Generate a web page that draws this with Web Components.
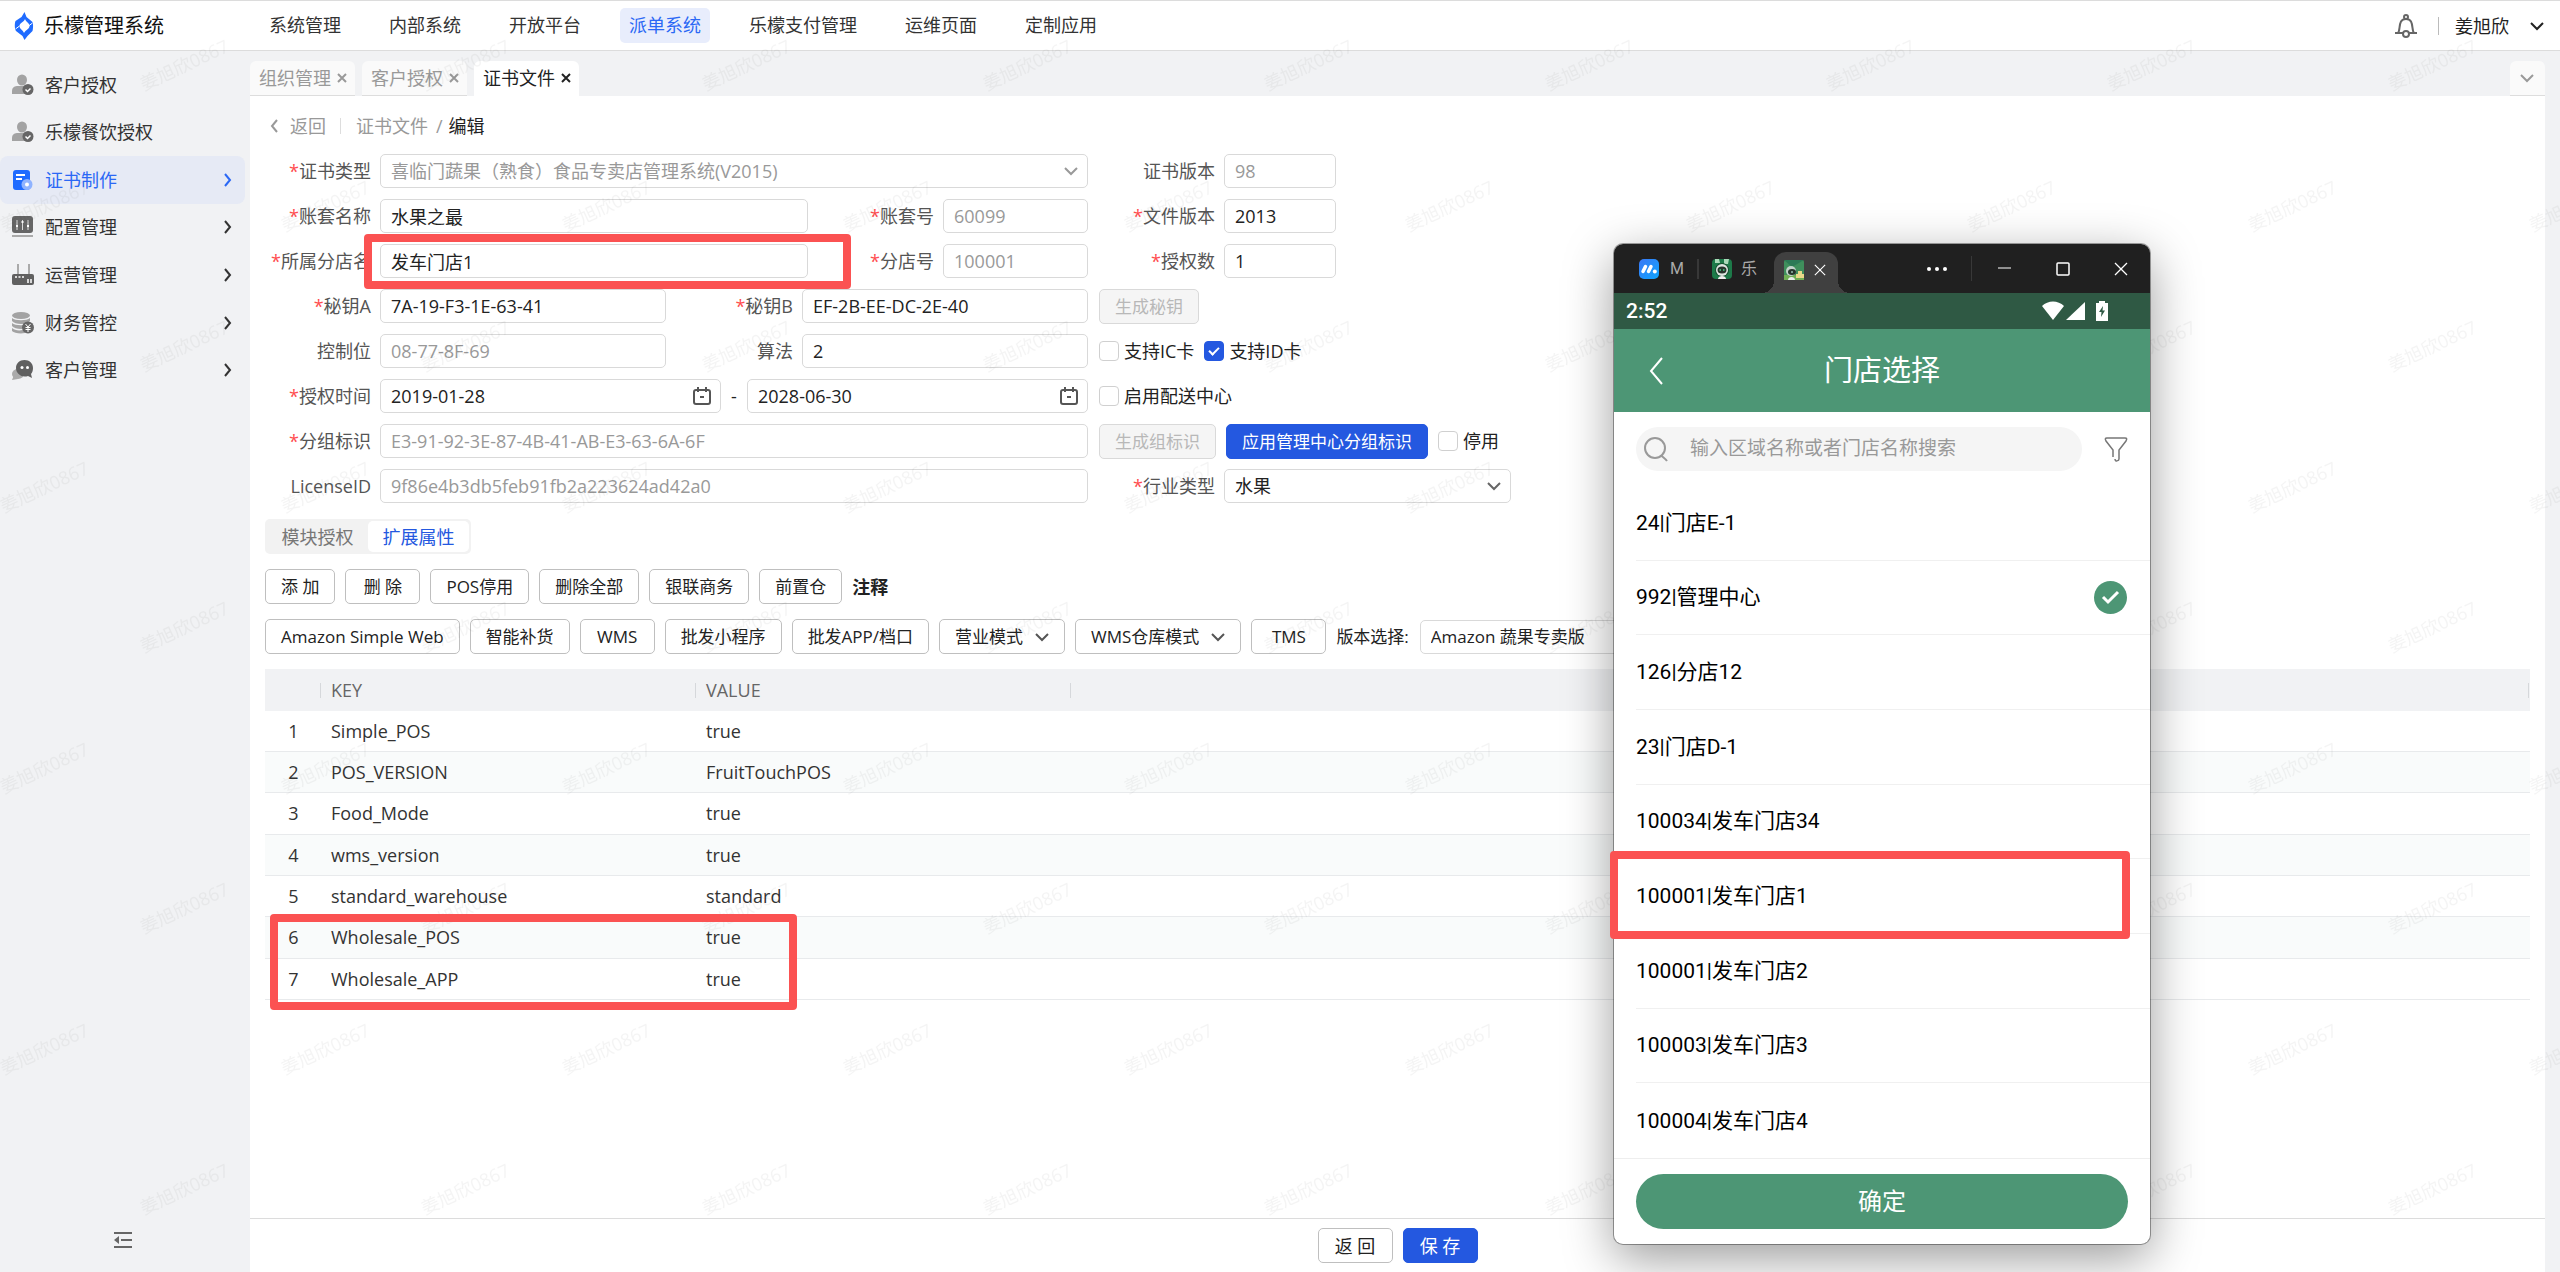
<!DOCTYPE html>
<html lang="zh-CN">
<head>
<meta charset="utf-8">
<title>乐檬管理系统</title>
<style>
  html, body { margin: 0; }
  body {
    position: relative;
    overflow-x: hidden;
    font-family: "Open Sans", "Noto Sans CJK SC", sans-serif;
    font-size: 18px;
    line-height: 24px;
    color: #222;
    background: #f1f2f4;
  }
</style>
</head>
<body>

<app-shell>
  <top-bar slot="top"></top-bar>
  <side-bar slot="side"></side-bar>
  <tab-strip slot="tabs"></tab-strip>
  <crumb-bar></crumb-bar>
  <license-form></license-form>
  <seg-switch></seg-switch>
  <tool-row>
    <ui-button>添 加</ui-button>
    <ui-button wide>删 除</ui-button>
    <ui-button>POS停用</ui-button>
    <ui-button>删除全部</ui-button>
    <ui-button>银联商务</ui-button>
    <ui-button>前置仓</ui-button>
    <b>注释</b>
  </tool-row>
  <tool-row>
    <ui-button>Amazon Simple Web</ui-button>
    <ui-button>智能补货</ui-button>
    <ui-button wide>WMS</ui-button>
    <ui-button>批发小程序</ui-button>
    <ui-button>批发APP/档口</ui-button>
    <ui-button menu>营业模式</ui-button>
    <ui-button menu>WMS仓库模式</ui-button>
    <ui-button wide>TMS</ui-button>
    <form-field class="version" label="版本选择:" type="select" value="Amazon 蔬果专卖版"></form-field>
  </tool-row>
  <data-grid></data-grid>
  <page-actions slot="foot"></page-actions>
</app-shell>
<water-mark></water-mark>
<phone-window></phone-window>

<script>
(function (customElements) {

  const ICONS = {
    logo: '<svg width="20" height="28" viewBox="0 0 20 28"><path fill="#1f6bff" d="M10.500 0l2 5 6 5c1 2 .5 8 0 9l-5 5-3 4-2-4-6.500-5C.5 17 .5 11 1.500 9l6-4z"/><path fill="#fff" d="M11 7c1 3 4.500 4 4.500 7s-4 4-5.500 7c-1-3-4.500-4-4.500-7S10 10 11 7z"/><path d="M14.500 14l4-3M5.500 14l-4 3" stroke="#fff" stroke-width="1"/></svg>',
    down: '<svg width="14" height="10" viewBox="0 0 14 10"><path d="M1 2l6 6 6-6" fill="none" stroke="currentColor" stroke-width="2"/></svg>',
    right: '<svg width="10" height="16" viewBox="0 0 10 16"><path d="M2 2l5 6-5 6" fill="none" stroke="currentColor" stroke-width="2"/></svg>',
    left: '<svg width="10" height="14" viewBox="0 0 10 14"><path d="M8 1L3 7l5 6" fill="none" stroke="currentColor" stroke-width="2"/></svg>',
    close: '<svg width="12" height="12" viewBox="0 0 12 12"><path d="M2 2l8 8M10 2l-8 8" fill="none" stroke="currentColor" stroke-width="2"/></svg>',
    bell: '<svg width="24" height="24" viewBox="0 0 24 24"><g fill="none" stroke="#666" stroke-width="2"><path d="M1 19h22M4 19c2-2 1-8 3-11.500C9 4 15 4 17 7.500c2 3.500 1 9.500 3 11.500"/><circle cx="12" cy="20" r="3" fill="#fff"/><circle cx="12" cy="3" r="2"/></g></svg>',
    person: '<svg width="22" height="22" viewBox="0 0 22 22"><ellipse cx="10" cy="6" rx="5" ry="5.500" fill="#a3a3a3"/><path fill="#a3a3a3" d="M0 20v-3c0-4 3-5 6-5h8c2 0 3 1 3 2v6z"/><circle cx="16" cy="15.500" r="5.500" fill="#666"/><path d="M13.500 15.500l2 2 3-3" fill="none" stroke="#fff" stroke-width="1.500"/></svg>',
    cert: '<svg width="22" height="22" viewBox="0 0 22 22"><rect x="1" y="1" width="17" height="20" rx="3" fill="#1f6bff"/><path d="M4 6h9M4 10h6" stroke="#fff" stroke-width="2"/><circle cx="15" cy="15.500" r="5.500" fill="#8fb3ff"/><circle cx="15" cy="15.500" r="2" fill="#fff"/></svg>',
    config: '<svg width="22" height="22" viewBox="0 0 22 22"><rect x="0" y="0" width="21" height="17" rx="3" fill="#666"/><rect x="0" y="19" width="21" height="2" fill="#aaa"/><path d="M5 4v10M10.500 4v10M16 4v10" stroke="#ddd" stroke-width="1"/><path d="M4 10h2M9.500 6h2M15 10h2" stroke="#fff" stroke-width="2"/></svg>',
    router: '<svg width="23" height="22" viewBox="0 0 23 22"><path d="M6 0v11M17 0v11" stroke="#aaa" stroke-width="2"/><rect x="0" y="10" width="22" height="11" rx="2" fill="#606060"/><path d="M3 13h2M6.500 13h2M10 13h2M16 15v4M19 15v4" stroke="#fff" stroke-width="1.500"/></svg>',
    money: '<svg width="22" height="22" viewBox="0 0 22 22"><g fill="#a3a3a3"><ellipse cx="9" cy="3.500" rx="9" ry="3.500"/><path d="M0 6c3 3 15 3 18 0v3c-3 4-15 4-18 0zM0 11c3 3 15 3 18 0v3c-3 4-15 4-18 0zM0 16c3 3 10 3 13 1v4c-5 1-11 0-13-2z"/></g><circle cx="16" cy="15.500" r="6" fill="#666"/><path d="M13.500 12l2.500 3 2.500-3M16 15v5M13.500 15.500h5M13.500 17.500h5" fill="none" stroke="#fff"/></svg>',
    chat: '<svg width="22" height="22" viewBox="0 0 22 22"><ellipse cx="6" cy="15" rx="6" ry="5" fill="#aaa"/><path d="M0 21l2-5 4 4z" fill="#aaa"/><path d="M12.500 1c5 0 8.500 3.500 8.500 8 0 3-1 5-2 6l1 4-4-2c-6 2-12-2-12-8 0-4.500 3.500-8 8.500-8z" fill="#606060"/><circle cx="10" cy="8.500" r="1.500" fill="#fff"/><circle cx="15.500" cy="8.500" r="1.500" fill="#fff"/></svg>',
    fold: '<svg width="18" height="16" viewBox="0 0 18 16"><path d="M0 1h18M7 8h11M0 15h18" stroke="#666" stroke-width="2"/><path d="M0 8l5-4v8z" fill="#666"/></svg>',
    calendar: '<svg width="18" height="18" viewBox="0 0 18 18"><g fill="none" stroke="#555" stroke-width="2"><rect x="1" y="3" width="16" height="14" rx="2"/><path d="M5 0v5M13 0v5M7 10h4"/></g></svg>',
    more: '<svg width="22" height="6" viewBox="0 0 22 6"><g fill="#fff"><circle cx="3" cy="3" r="2"/><circle cx="11" cy="3" r="2"/><circle cx="19" cy="3" r="2"/></g></svg>',
    min: '<svg width="14" height="14" viewBox="0 0 14 14"><path d="M0 6h13" stroke="#fff" stroke-width="1"/></svg>',
    max: '<svg width="14" height="14" viewBox="0 0 14 14"><rect x="1" y="1" width="12" height="12" rx="1" fill="none" stroke="#fff" stroke-width="1.500"/></svg>',
    exit: '<svg width="14" height="14" viewBox="0 0 14 14"><path d="M1 1l12 12M13 1L1 13" stroke="#fff" stroke-width="1.300"/></svg>',
    monitor: '<svg width="20" height="20" viewBox="0 0 20 20"><defs><linearGradient id="b" x1="0" y1="0" x2="1" y2="1"><stop offset="0" stop-color="#3a78f5"/><stop offset="1" stop-color="#0fa5ff"/></linearGradient></defs><rect width="20" height="20" rx="5" fill="url(#b)"/><path d="M4 12.500l2.500-5M9.500 12.500l2.500-5" stroke="#fff" stroke-width="3.500" stroke-linecap="round"/><circle cx="15.800" cy="12.500" r="2" fill="#fff"/></svg>',
    robot: '<svg width="20" height="20" viewBox="0 0 20 20"><rect width="20" height="20" rx="4" fill="#1d7a49"/><path d="M3 0h4l1 4H3zM12 0h5l-1 5h-4z" fill="#a9d9b8"/><circle cx="10" cy="11" r="7" fill="#15502f"/><circle cx="10" cy="11" r="6" fill="#dfe6e2"/><ellipse cx="10" cy="11" rx="4.500" ry="3.500" fill="#26352c"/><path d="M7.500 11h1.500M11 11h1.500" stroke="#49d68a" stroke-width="1.500"/><path d="M6 20c0-4 8-4 8 0z" fill="#eee"/></svg>',
    robotSmall: '<svg width="20" height="20" viewBox="0 0 20 20"><rect width="20" height="20" rx="2" fill="#3f8f5c"/><path d="M0 0h20L8 7z" fill="#2c7a56"/><path d="M0 15h20v5H0z" fill="#6fae54"/><circle cx="7" cy="11" r="5" fill="#c3d3ca"/><ellipse cx="8" cy="12" rx="4" ry="3" fill="#26352c"/><path d="M7 12h2" stroke="#cfe" /><path d="M4 20c0-4 7-4 7 0z" fill="#e8eeea"/><path d="M12 14h2v-3h4v3h2v4h-8z" fill="#e9d989"/></svg>',
    wifi: '<svg width="22" height="20" viewBox="0 0 22 20"><path fill="#fff" d="M0 5c6-6 16-6 22 0L11 19z"/></svg>',
    signal: '<svg width="20" height="20" viewBox="0 0 20 20"><path fill="#fff" d="M19 1v18H0z"/></svg>',
    battery: '<svg width="12" height="20" viewBox="0 0 12 20"><path fill="#fff" d="M3 0h6v2h3v18H0V2h3z"/><path fill="#2f5944" d="M7 5l-4 6h2.500l-.5 5 4-6.500H6.500z"/></svg>',
    back: '<svg width="14" height="28" viewBox="0 0 14 28"><path d="M13 1L2 14l11 13" fill="none" stroke="#fff" stroke-width="2"/></svg>',
    search: '<svg width="24" height="26" viewBox="0 0 24 26"><g fill="none" stroke="#999" stroke-width="2"><circle cx="11" cy="12" r="10"/><path d="M17 19c1 2 4 3 6 6"/></g></svg>',
    filter: '<svg width="24" height="25" viewBox="0 0 24 25"><path d="M9 20V13L2 4c-1-2-1-3 1-3h18c2 0 2 1 1 3l-7 9v9c0 2-4 3-4 0" fill="none" stroke="#777" stroke-width="1.500"/></svg>',
    tick: '<svg width="33" height="33" viewBox="0 0 33 33"><circle cx="16.500" cy="16.500" r="16.500" fill="#4d9675"/><path d="M9 16l5 5 10-10" fill="none" stroke="#fff" stroke-width="3"/></svg>'
  };

  const BASE = `
    :host, *, *::before, *::after { box-sizing: border-box; }
    svg { display: block; flex: none; }
    a { color: inherit; text-decoration: none; }
    button, input, select { font: inherit; color: inherit; margin: 0; }
    ul { list-style: none; margin: 0; padding: 0; }
  `;

  /**
   * Registers an element from its styles and a function that returns its markup.
   */
  const define = (name, css, markup) => {
    customElements.define(name, class extends HTMLElement {
      constructor() {
        super();
        this.attachShadow({ mode: 'open' });
      }

      connectedCallback() {
        const template = document.createElement('template');
        template.innerHTML = `<style>${BASE}${css}</style>${markup(this)}`;
        this.shadowRoot.replaceChildren(template.content.cloneNode(true));
      }
    });
  };

  define('app-shell', `
    :host { display: grid; grid-template: auto 1fr / 250px minmax(0, 1fr); min-height: 100vh; }
    .top { grid-column: 1 / -1; }
    .side { display: grid; }
    main { display: flex; flex-direction: column; padding-right: 15px; }
    .page { flex: 1; display: flex; flex-direction: column; gap: 15px; padding: 0 15px 15px; background: #fff; }
    .foot { background: #fff; }
  `, () => `
    <div class="top"><slot name="top"></slot></div>
    <div class="side"><slot name="side"></slot></div>
    <main>
      <slot name="tabs"></slot>
      <div class="page"><slot></slot></div>
      <div class="foot"><slot name="foot"></slot></div>
    </main>
  `);

  const MENUS = ['系统管理', '内部系统', '开放平台', '派单系统', '乐檬支付管理', '运维页面', '定制应用'];

  define('top-bar', `
    :host { display: flex; align-items: center; height: 51px; padding: 0 16px 0 14px; background: #fff; border: solid #dcdcdc; border-width: 1px 0; }
    h1 { width: 216px; margin: 0 0 0 10px; font-size: 20px; font-weight: 400; color: #111; }
    nav { flex: 1; display: flex; gap: 30px; }
    nav a { padding: 0 9px; line-height: 35px; border-radius: 5px; color: #333; }
    nav a.on { background: #e8edfc; color: #2b68f5; }
    .user { display: flex; align-items: center; background: none; border: 0; border-left: 1px solid #bbb; padding: 0 0 0 16px; line-height: 18px; height: 18px; gap: 21px; }
    .bell { background: none; border: 0; padding: 0; margin-right: 20px; }
  `, () => `
    ${ICONS.logo}
    <h1>乐檬管理系统</h1>
    <nav>${MENUS.map((m) => `<a href="#" class="${m === '派单系统' ? 'on' : ''}">${m}</a>`).join('')}</nav>
    <button class="bell" aria-label="通知">${ICONS.bell}</button>
    <button class="user">姜旭欣 ${ICONS.down}</button>
  `);

  const SECTIONS = [
    ['person', '客户授权'], ['person', '乐檬餐饮授权'], ['cert', '证书制作', true, true],
    ['config', '配置管理', true], ['router', '运营管理', true], ['money', '财务管控', true], ['chat', '客户管理', true]
  ];

  define('side-bar', `
    :host { display: flex; flex-direction: column; justify-content: space-between; padding: 10px 5px 24px 0; color: #333; }
    nav { display: grid; grid-auto-rows: 1fr; height: 333px; }
    a { display: grid; grid-template-columns: 23px 1fr 10px; gap: 10px; align-items: center; padding: 0 12px; border-radius: 8px; }
    a.on { background: #e6eaf5; color: #2b68f5; }
    .fold { align-self: center; background: none; border: 0; padding: 0; }
  `, () => `
    <nav>${SECTIONS.map(([icon, text, more, on]) =>
      `<a href="#" class="${on ? 'on' : ''}">${ICONS[icon]}<span>${text}</span>${more ? ICONS.right : ''}</a>`).join('')}</nav>
    <button class="fold" aria-label="收起">${ICONS.fold}</button>
  `);

  define('tab-strip', `
    :host { display: flex; gap: 7px; height: 45px; padding-top: 10px; color: #999; }
    .tab { display: flex; align-items: center; gap: 5px; width: 105px; padding-left: 9px; background: #fafafa; border-bottom: 1px solid #ddd; border-radius: 6px 6px 0 0; }
    .tab svg { width: 12px; }
    .on { background: #fff; color: #222; border-color: #fff; }
    button { width: 35px; margin-left: auto; padding: 0 10px; background: #fafafa; border: 0; border-bottom: 1px solid #ddd; border-radius: 6px 6px 0 0; }
  `, () => `
    <a href="#" class="tab">组织管理${ICONS.close}</a>
    <a href="#" class="tab">客户授权${ICONS.close}</a>
    <a href="#" class="tab on">证书文件${ICONS.close}</a>
    <button aria-label="更多标签">${ICONS.down}</button>
  `);

  define('crumb-bar', `
    :host { display: flex; align-items: center; height: 43px; padding: 17px 0 0 4px; color: #999; }
    .back { display: flex; align-items: center; gap: 11px; padding-right: 14px; border-right: 1px solid #ddd; line-height: 16px; }
    ol { display: flex; gap: 8px; list-style: none; margin: 0; padding: 0 0 0 15px; }
    li:last-child { color: #222; }
    li:last-child::before { content: "/"; color: #999; margin-right: 6px; }
  `, () => `
    <a href="#" class="back">${ICONS.left}返回</a>
    <ol><li><a href="#">证书文件</a></li><li>编辑</li></ol>
  `);

  define('form-field', `
    :host { display: flex; align-items: center; gap: 9px; height: 34px; position: relative; }
    label { width: var(--label, 106px); text-align: right; color: #555; white-space: nowrap; }
    .req::before { content: "*"; color: #ff4d4f; }
    .box { display: grid; align-items: center; width: var(--field, 708px); }
    .box > * { grid-area: 1 / 1; }
    input, select { width: 100%; height: 34px; padding: 0 10px; border: 1px solid #d9d9d9; border-radius: 5px; background: #fff; color: #222; appearance: none; outline: 0; }
    input:disabled, select:disabled { color: #999; opacity: 1; }
    svg { justify-self: end; margin-right: 10px; color: #666; pointer-events: none; }
    select:disabled + svg { color: #999; }
    :host(.version) { --label: auto; --field: 286px; gap: 11px; font-size: 17px; }
    :host(.version) label { color: #222; }
  `, (el) => {
    const type = el.getAttribute('type');
    const value = el.getAttribute('value');
    const off = el.hasAttribute('off') ? 'disabled' : '';
    const label = el.getAttribute('label');
    const control = type === 'select'
      ? `<select id="c" ${off}><option>${value}</option></select>${ICONS.down}`
      : `<input id="c" type="text" value="${value}" ${off} ${label ? '' : 'aria-label="结束日期"'}>${type === 'date' ? ICONS.calendar : ''}`;
    return `
      ${label ? `<label for="c" class="${el.hasAttribute('req') ? 'req' : ''}">${label}</label>` : ''}
      <span class="box">${control}</span>
      <slot></slot>
    `;
  });

  define('ui-button', `
    :host { display: block; font-size: 17px; }
    button { display: flex; align-items: center; justify-content: center; gap: 12px; height: 35px; padding: 0 15px; border: 1px solid #bfbfbf; border-radius: 5px; background: #fff; white-space: nowrap; line-height: 24px; }
    :host([wide]) button { min-width: 75px; }
    :host([big]) button { width: 75px; padding: 0; }
    svg { color: #555; }
    :host([primary]) button { background: #2458e0; border-color: #2458e0; color: #fff; }
    button:disabled { background: #f5f5f5; border-color: #d9d9d9; color: #b8b8b8; }
  `, (el) => `
    <button type="button" ${el.hasAttribute('off') ? 'disabled' : ''}><slot></slot>${el.hasAttribute('menu') ? ICONS.down : ''}</button>
  `);

  define('ui-check', `
    :host { display: block; }
    label { display: flex; align-items: center; gap: 5px; height: 34px; }
    input { appearance: none; display: grid; place-items: center; width: 20px; height: 20px; margin: 0; border: 1px solid #d0d0d0; border-radius: 4px; background: #fff; }
    input:checked { background: #2458e0; border-color: #2458e0; }
    input:checked::before { content: ""; width: 6px; height: 10px; margin-bottom: 3px; border: solid #fff; border-width: 0 2px 2px 0; transform: rotate(45deg); }
  `, (el) => `
    <label><input type="checkbox" ${el.hasAttribute('on') ? 'checked' : ''}><span><slot></slot></span></label>
  `);

  /* Red callout frame; its offsets come from the --inset of the place it marks. */
  define('mark-box', `
    :host { position: absolute; inset: var(--inset); border: 8px solid #fb5252; border-radius: 4px; pointer-events: none; z-index: 1; }
  `, () => '');

  define('license-form', `
    :host { display: block; margin-bottom: 1px; }
    form { display: grid; grid-template-columns: 823px 1fr; grid-auto-rows: 34px; gap: 11px; }
    form > div { display: flex; align-items: flex-start; gap: 10px; }
    .pair { justify-content: space-between; }
    .name { --field: 428px; }
    .code { --field: 145px; }
    .half { --field: 286px; }
    .date { --field: 341px; }
    .dash { line-height: 34px; }
    .right { --label: 116px; --field: 112px; }
    .trade { --label: 116px; --field: 287px; }
    mark-box { --inset: -10px -43px -11px 99px; }
  `, () => `
    <form>
      <div><form-field req off label="证书类型" type="select" value="喜临门蔬果（熟食）食品专卖店管理系统(V2015)"></form-field></div>
      <div class="right"><form-field off label="证书版本" value="98"></form-field></div>

      <div class="pair">
        <form-field class="name" req label="账套名称" value="水果之最"></form-field>
        <form-field class="code" req off label="账套号" value="60099"></form-field>
      </div>
      <div class="right"><form-field req label="文件版本" value="2013"></form-field></div>

      <div class="pair">
        <form-field class="name" req label="所属分店名" value="发车门店1"><mark-box></mark-box></form-field>
        <form-field class="code" req off label="分店号" value="100001"></form-field>
      </div>
      <div class="right"><form-field req label="授权数" value="1"></form-field></div>

      <div class="pair">
        <form-field class="half" req label="秘钥A" value="7A-19-F3-1E-63-41"></form-field>
        <form-field class="half" req label="秘钥B" value="EF-2B-EE-DC-2E-40"></form-field>
      </div>
      <div><ui-button off>生成秘钥</ui-button></div>

      <div class="pair">
        <form-field class="half" off label="控制位" value="08-77-8F-69"></form-field>
        <form-field class="half" label="算法" value="2"></form-field>
      </div>
      <div><ui-check>支持IC卡</ui-check><ui-check on>支持ID卡</ui-check></div>

      <div class="pair">
        <form-field class="date" req label="授权时间" type="date" value="2019-01-28"></form-field>
        <span class="dash">-</span>
        <form-field class="date" type="date" value="2028-06-30"></form-field>
      </div>
      <div><ui-check>启用配送中心</ui-check></div>

      <div><form-field req off label="分组标识" value="E3-91-92-3E-87-4B-41-AB-E3-63-6A-6F"></form-field></div>
      <div><ui-button off>生成组标识</ui-button><ui-button primary>应用管理中心分组标识</ui-button><ui-check>停用</ui-check></div>

      <div><form-field off label="LicenseID" value="9f86e4b3db5feb91fb2a223624ad42a0"></form-field></div>
      <div class="trade"><form-field req label="行业类型" type="select" value="水果"></form-field></div>
    </form>
  `);

  define('seg-switch', `
    :host { display: flex; align-self: flex-start; padding: 2px; border-radius: 5px; background: #f2f2f2; }
    button { height: 31px; width: 101px; padding: 0; border: 0; border-radius: 5px; background: none; color: #777; }
    .on { background: #fff; color: #2458e0; }
  `, () => '<button>模块授权</button><button class="on">扩展属性</button>');

  define('tool-row', `
    :host { display: flex; align-items: center; gap: 10px; height: 35px; }
  `, () => '<slot></slot>');

  const ROWS = [
    ['Simple_POS', 'true'], ['POS_VERSION', 'FruitTouchPOS'], ['Food_Mode', 'true'], ['wms_version', 'true'],
    ['standard_warehouse', 'standard'], ['Wholesale_POS', 'true'], ['Wholesale_APP', 'true']
  ];

  define('data-grid', `
    :host { display: block; position: relative; }
    table { width: 100%; height: 331px; table-layout: fixed; border-collapse: collapse; color: #333; }
    th { height: 42px; text-align: left; font-weight: 400; color: #666; background: linear-gradient(#d6d8db, #d6d8db) 0 50% / 1px 15px no-repeat #f1f2f4; }
    th:first-child { background: #f1f2f4; }
    th, td { padding: 0 0 0 11px; }
    td { border-bottom: 1px solid #e8eaec; }
    td:first-child { padding: 0 0 0 2px; text-align: center; }
    tr:nth-child(even) td { background: #f9fbfb; }
    mark-box { --inset: 245px auto -10px 5px; width: 527px; }
  `, () => `
    <table>
      <colgroup><col style="width:55px"><col style="width:375px"><col style="width:375px"><col><col style="width:2px"></colgroup>
      <thead><tr><th></th><th>KEY</th><th>VALUE</th><th></th><th></th></tr></thead>
      <tbody>${ROWS.map(([key, value], i) => `<tr><td>${i + 1}</td><td>${key}</td><td>${value}</td><td></td><td></td></tr>`).join('')}</tbody>
    </table>
    <mark-box></mark-box>
  `);

  define('page-actions', `
    :host { display: flex; justify-content: center; gap: 10px; padding: 9px 0; border-top: 1px solid #dcdcdc; }
    ui-button { font-size: 18px; }
  `, () => '<ui-button big>返 回</ui-button><ui-button big primary>保 存</ui-button>');

  define('water-mark', `
    :host { position: absolute; inset: 0; pointer-events: none; }
    text { font-size: 18px; fill: #000; fill-opacity: .045; }
  `, () => `
    <svg width="100%" height="100%" aria-hidden="true">
      <defs>
        <pattern id="w" width="281" height="281" patternUnits="userSpaceOnUse">
          <text transform="translate(144 91) rotate(-25)">姜旭欣0867</text>
          <text transform="translate(4 232) rotate(-25)">姜旭欣0867</text>
        </pattern>
      </defs>
      <rect width="100%" height="100%" fill="url(#w)"/>
    </svg>
  `);

  const SHOPS = [
    '24|门店E-1', '992|管理中心', '126|分店12', '23|门店D-1', '100034|发车门店34',
    '100001|发车门店1', '100001|发车门店2', '100003|发车门店3', '100004|发车门店4'
  ];

  define('phone-window', `
    :host {
      position: absolute; left: 1614px; top: 244px; width: 536px; height: 1000px;
      display: flex; flex-direction: column;
      font-family: Roboto, "Noto Sans CJK SC", sans-serif; font-size: 21px; color: #000;
      background: #fff; border-radius: 9px;
      box-shadow: 0 0 0 1px rgba(0, 0, 0, .35), 0 14px 50px rgba(0, 0, 0, .4);
    }
    button { background: none; border: 0; padding: 0; }
    .title { display: flex; align-items: flex-end; height: 49px; padding-left: 25px; background: #202020; border-radius: 9px 9px 0 0; color: #aaa; font-size: 16px; }
    .app { display: flex; align-items: center; gap: 11px; height: 20px; margin-bottom: 14px; width: 60px; border-right: 2px solid #383838; }
    .app + .app { width: 62px; margin-left: 13px; gap: 9px; border: 0; }
    .app.open { position: relative; height: 41px; width: 64px; margin: 0; padding: 0 0 6px 10px; gap: 10px; background: #404040; border-radius: 12px 12px 0 0; color: #fff; }
    .open svg:last-child { width: 12px; }
    .open::before, .open::after { content: ""; position: absolute; bottom: 0; width: 12px; height: 12px; }
    .open::before { left: -12px; background: radial-gradient(circle at 0 0, transparent 12px, #404040 12px); }
    .open::after { right: -12px; background: radial-gradient(circle at 100% 0, transparent 12px, #404040 12px); }
    .ctl { display: grid; place-items: center; width: 58px; height: 49px; }
    .dots { width: 68px; margin-left: auto; }
    .rule { width: 1px; height: 25px; margin: 0 4px 12px 0; background: #383838; }
    .status { display: flex; align-items: center; gap: 2px; height: 36px; padding: 0 42px 0 12px; background: #2f5944; color: #fff; font-size: 21px; font-weight: 500; }
    .status span { flex: 1; }
    .status svg:last-child { margin-left: 8px; }
    header { display: grid; grid-template-columns: 1fr auto 1fr; align-items: center; height: 83px; padding: 0 35px; background: #4d9675; color: #fff; }
    h2 { margin: 0; font-size: 29px; line-height: 40px; font-weight: 400; }
    .find { display: flex; align-items: center; gap: 22px; padding: 15px 22px; }
    .find label { flex: 1; display: flex; align-items: center; gap: 22px; height: 44px; padding: 0 8px; border-radius: 22px; background: #f5f5f5; }
    .find input { flex: 1; min-width: 0; border: 0; padding: 0; background: none; outline: 0; font-size: 19px; }
    .find input::placeholder { color: #999; opacity: 1; }
    ul { flex: 1; display: grid; grid-auto-rows: 1fr; padding-left: 22px; border-bottom: 1px solid #eee; }
    li { position: relative; display: flex; align-items: center; justify-content: space-between; padding: 0 23px 0 0; border-bottom: 1px solid #f0f0f0; }
    li:last-child { border: 0; }
    mark-box { --inset: -8px 20px -6px -26px; }
    .ok { height: 55px; margin: 15px 22px; border-radius: 28px; background: #4d9675; color: #fff; font-size: 24px; }
  `, () => `
    <div class="title">
      <div class="app">${ICONS.monitor}<span>M</span></div>
      <div class="app">${ICONS.robot}<span>乐</span></div>
      <div class="app open">${ICONS.robotSmall}${ICONS.exit}</div>
      <button class="ctl dots" aria-label="更多">${ICONS.more}</button>
      <i class="rule"></i>
      <button class="ctl" aria-label="最小化">${ICONS.min}</button>
      <button class="ctl" aria-label="最大化">${ICONS.max}</button>
      <button class="ctl" aria-label="关闭">${ICONS.exit}</button>
    </div>
    <div class="status"><span>2:52</span>${ICONS.wifi}${ICONS.signal}${ICONS.battery}</div>
    <header><button aria-label="后退">${ICONS.back}</button><h2>门店选择</h2></header>
    <div class="find">
      <label>${ICONS.search}<input type="search" placeholder="输入区域名称或者门店名称搜索"></label>
      <button aria-label="筛选">${ICONS.filter}</button>
    </div>
    <ul>${SHOPS.map((shop, i) => `<li>${shop}${i === 1 ? ICONS.tick : ''}${i === 5 ? '<mark-box></mark-box>' : ''}</li>`).join('')}</ul>
    <button class="ok">确定</button>
  `);

})(window.customElements);
</script>
</body>
</html>
